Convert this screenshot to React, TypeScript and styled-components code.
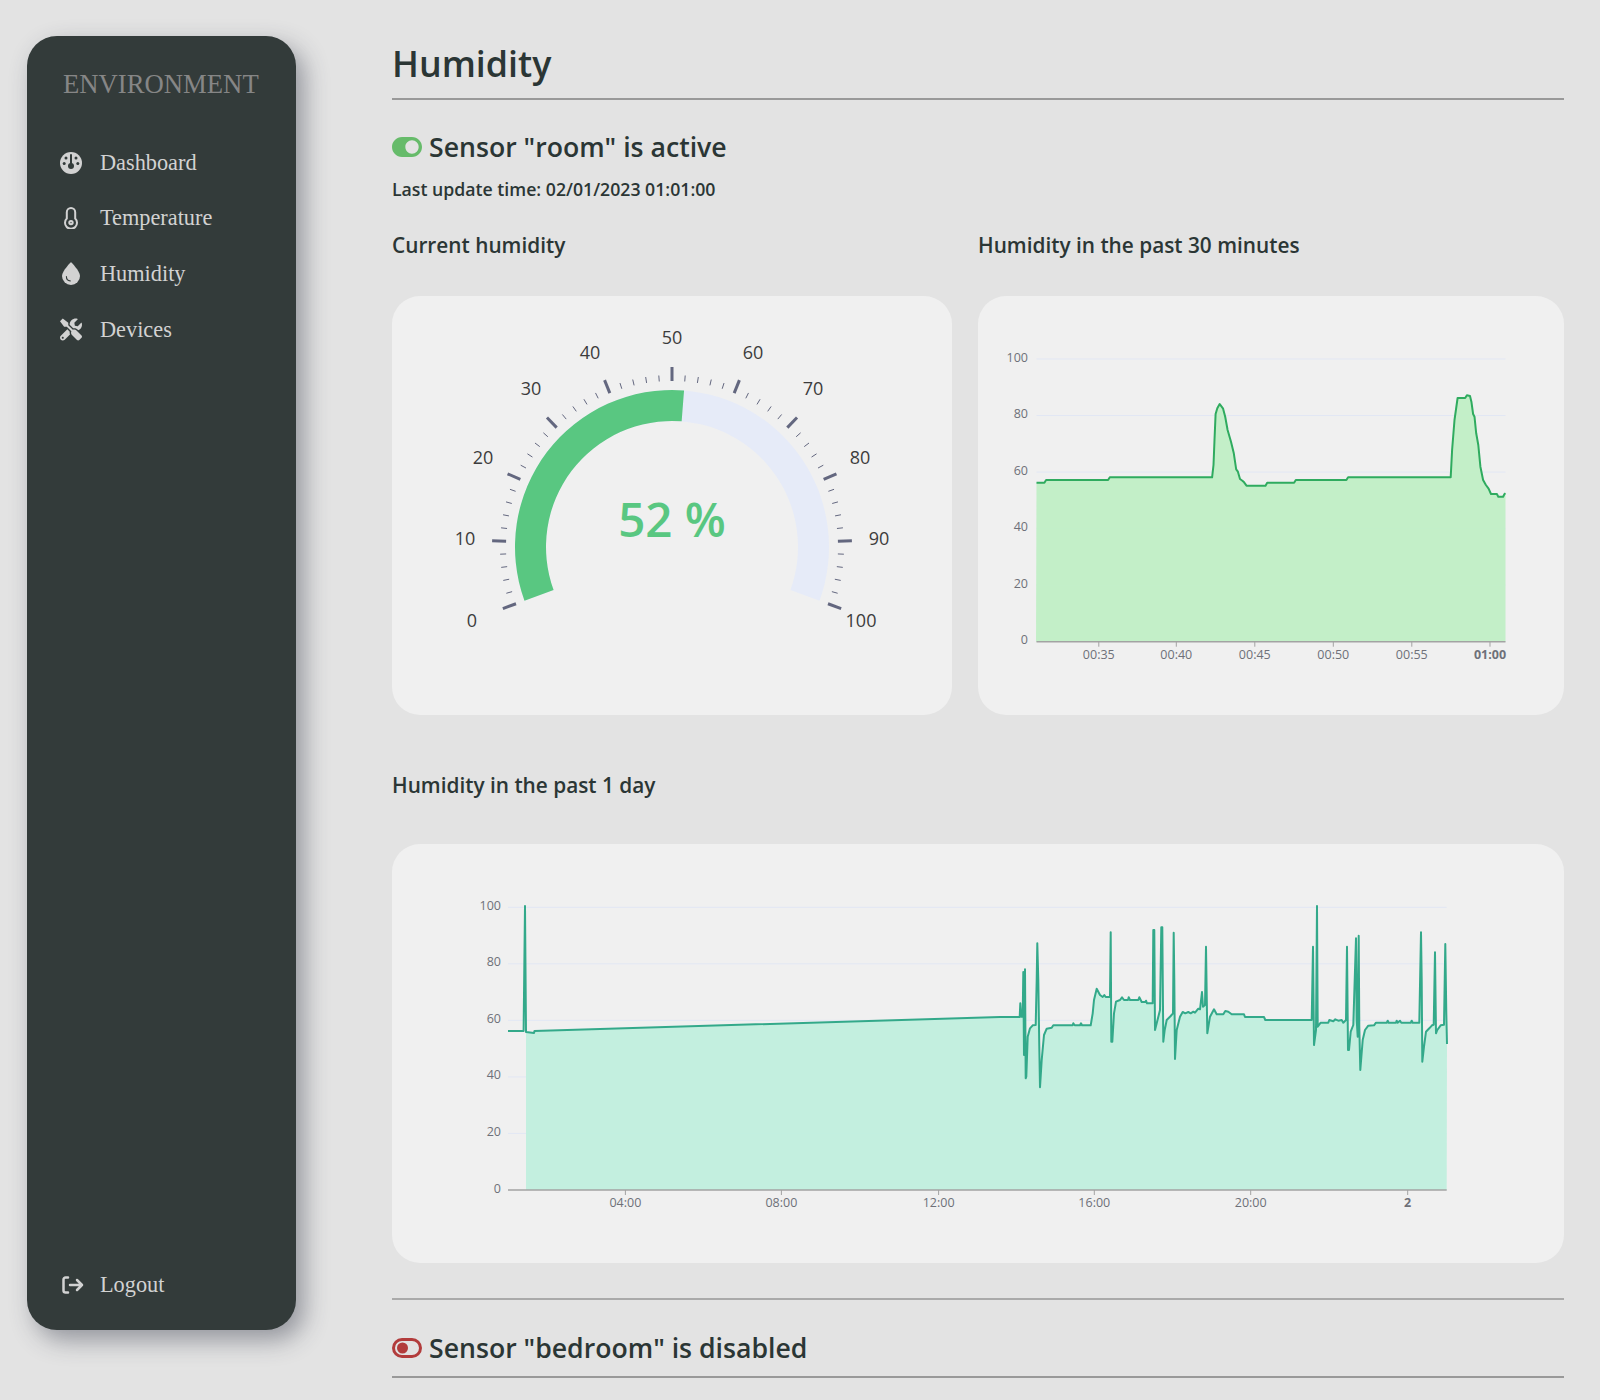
import React from "react";
import styled, { createGlobalStyle } from "styled-components";
import { FaTools, FaToggleOn } from "react-icons/fa";

const GlobalStyle = createGlobalStyle`
  html, body {
    margin: 0;
    padding: 0;
    background: #e3e3e3;
  }
  body {
    font-family: "Open Sans", "Noto Sans", sans-serif;
    color: #2b3635;
    overflow: hidden;
  }
`;

const Page = styled.div`
  display: flex;
  height: 1400px;
  padding: 36px 36px 0 27px;
  box-sizing: border-box;
`;

const Sidebar = styled.nav`
  display: flex;
  flex-direction: column;
  width: 269px;
  height: 1294px;
  flex-shrink: 0;
  box-sizing: border-box;
  padding: 33px 0 17px 33px;
  background: #333b3a;
  border-radius: 30px;
  box-shadow: 8px 10px 24px rgba(50, 55, 70, 0.45);
  font-family: "Liberation Serif", serif;
`;

const Brand = styled.div`
  font-size: 26.7px;
  line-height: 30px;
  margin: 0 0 36px 3px;
  color: #868686;
  white-space: nowrap;
`;

const MenuItem = styled.a<{ $bottom?: boolean }>`
  display: flex;
  align-items: center;
  height: 55.6px;
  margin-top: ${(p) => (p.$bottom ? "auto" : "0")};
  font-size: 22.3px;
  color: #d2d2d2;
  cursor: pointer;
`;

const IconSlot = styled.span`
  display: flex;
  justify-content: center;
  width: 22px;
  margin-right: 18px;
  font-size: 23px;
  color: #d2d2d2;
`;

const LogoutSlot = styled(IconSlot)`
  margin: 0 16px 0 2px;
`;

const Main = styled.main`
  width: 1172px;
  margin-left: 96px;
`;

const Title = styled.h1`
  margin: 0;
  height: 62px;
  font-size: 35.8px;
  line-height: 54px;
  font-weight: 600;
  border-bottom: 2px solid #999;
`;

const SensorHeading = styled.h2`
  display: flex;
  align-items: center;
  gap: 7px;
  margin: 0;
  font-size: 26.65px;
  line-height: 36px;
  font-weight: 600;
  svg {
    font-size: 30px;
    flex-shrink: 0;
  }
`;

const ActiveHeading = styled(SensorHeading)`
  margin-top: 29px;
  svg {
    color: #66bb6a;
  }
`;

const DisabledHeading = styled(SensorHeading)`
  margin-top: 25px;
  height: 46px;
  border-bottom: 2px solid #999;
  padding-bottom: 5px;
`;

const UpdateTime = styled.div`
  margin-top: 12px;
  font-size: 17.7px;
  line-height: 24px;
  font-weight: 600;
`;

const ChartRow = styled.div`
  display: grid;
  grid-template-columns: 560px 586px;
  column-gap: 26px;
  margin-top: 30px;
`;

const ChartTitle = styled.div`
  font-size: 20.8px;
  line-height: 28px;
  font-weight: 600;
  margin-bottom: 37px;
`;

const DayChartTitle = styled(ChartTitle)`
  margin-bottom: 45px;
`;

const Panel = styled.div`
  height: 419px;
  background: #f0f0f0;
  border-radius: 28px;
  overflow: hidden;
  svg {
    display: block;
  }
`;

const DayChartSection = styled.section`
  margin-top: 56px;
`;

const Divider = styled.hr`
  margin: 35px 0 0;
  border: 0;
  border-top: 2px solid #aaa;
`;

const AxisText = styled.text<{ $bold?: boolean }>`
  font-family: "Open Sans", sans-serif;
  font-size: 12.5px;
  font-weight: ${(p) => (p.$bold ? 700 : 400)};
  fill: #6e7079;
`;

const GaugeLabel = styled.text`
  font-family: "Open Sans", sans-serif;
  font-size: 18px;
  fill: #3c3c3c;
`;

const GaugeValue = styled.text`
  font-family: "Open Sans", sans-serif;
  font-size: 47.5px;
  font-weight: 600;
  fill: #59c781;
`;

type Pt = [number, number];

const DARK = "#333b3a";

const DashboardIcon = () => (
  <svg width="22" height="22" viewBox="0 0 22 22">
    <circle cx="11" cy="11" r="11" fill="currentColor" />
    <path d="M11 3v9" stroke={DARK} strokeWidth="2" strokeLinecap="round" />
    <circle cx="11" cy="14" r="3" fill={DARK} />
    <circle cx="4.2" cy="11.5" r="1.5" fill={DARK} />
    <circle cx="17.8" cy="11.5" r="1.5" fill={DARK} />
    <circle cx="6" cy="6" r="1.5" fill={DARK} />
    <circle cx="16" cy="6" r="1.5" fill={DARK} />
  </svg>
);

const ThermometerIcon = () => (
  <svg width="14" height="22" viewBox="0 0 14 22" fill="none" stroke="currentColor" strokeWidth="2">
    <path d="M2.8 11.5V5.2a4.2 4.2 0 0 1 8.4 0v6.3a6 6 0 1 1-8.4 0Z" />
    <circle cx="7" cy="15.6" r="1.7" />
  </svg>
);

const DropIcon = () => (
  <svg width="18" height="23" viewBox="0 0 18 23">
    <path d="M9 0C9 0 18 9 18 14a9 9 0 0 1-18 0C0 9 9 0 9 0Z" fill="currentColor" />
    <path d="M4.4 14.5c0 2.6 1.6 4.2 3.8 4.4" fill="none" stroke={DARK} strokeWidth="1.1" strokeLinecap="round" />
  </svg>
);

const LogoutIcon = () => (
  <svg width="22" height="18" viewBox="0 0 22 18" fill="none" stroke="currentColor" strokeWidth="2.5" strokeLinecap="round" strokeLinejoin="round">
    <path d="M6 1.5H3.5a2 2 0 0 0-2 2v11a2 2 0 0 0 2 2H6" />
    <path d="M8 9h12M15 4l5 5-5 5" />
  </svg>
);

const ToggleOffIcon = () => (
  <svg width="30" height="20" viewBox="0 0 30 20">
    <rect x="1.5" y="1.5" width="27" height="17" rx="8.5" fill="none" stroke="#b23c3c" strokeWidth="3" />
    <circle cx="10.5" cy="10" r="5.5" fill="#b23c3c" />
  </svg>
);

/* gauge, drawn in panel coordinates */
const GX = 280;
const GY = 251;

const polar = (r: number, deg: number): Pt => {
  const a = (deg * Math.PI) / 180;
  return [GX + r * Math.cos(a), GY - r * Math.sin(a)];
};

const angleOf = (v: number) => 200 - (v / 100) * 220;

const ringPath = (from: number, to: number, r0: number, r1: number) => {
  const [x0, y0] = polar(r1, angleOf(from));
  const [x1, y1] = polar(r1, angleOf(to));
  const [x2, y2] = polar(r0, angleOf(to));
  const [x3, y3] = polar(r0, angleOf(from));
  const large = ((to - from) / 100) * 220 > 180 ? 1 : 0;
  return `M${x0} ${y0}A${r1} ${r1} 0 ${large} 1 ${x1} ${y1}L${x2} ${y2}A${r0} ${r0} 0 ${large} 0 ${x3} ${y3}Z`;
};

const gaugeLabels: [string, number, number][] = [
  ["0", 80, 324],
  ["10", 73, 242],
  ["20", 91, 161],
  ["30", 139, 92],
  ["40", 198, 56],
  ["50", 280, 41],
  ["60", 361, 56],
  ["70", 421, 92],
  ["80", 468, 161],
  ["90", 487, 242],
  ["100", 469, 324],
];

const Gauge = () => {
  const ticks = [];
  for (let v = 0; v <= 100; v += 2) {
    const major = v % 10 === 0;
    const [x0, y0] = polar(major ? 180 : 172, angleOf(v));
    const [x1, y1] = polar(166, angleOf(v));
    ticks.push(<line key={v} x1={x0} y1={y0} x2={x1} y2={y1} stroke="#63677f" strokeWidth={major ? 3 : 1} />);
  }
  return (
    <svg width="560" height="418" viewBox="0 0 560 418">
      <path d={ringPath(0, 100, 126, 157)} fill="#e6ebf8" />
      <path d={ringPath(0, 52, 126, 157)} fill="#59c781" />
      {ticks}
      {gaugeLabels.map(([t, x, y]) => (
        <GaugeLabel key={t} x={x} y={y} textAnchor="middle" dominantBaseline="central">
          {t}
        </GaugeLabel>
      ))}
      <GaugeValue x={280} y={222} textAnchor="middle" dominantBaseline="central">
        52 %
      </GaugeValue>
    </svg>
  );
};

const toPath = (pts: Pt[]) => pts.map(([x, y], i) => `${i ? "L" : "M"}${x.toFixed(1)} ${y.toFixed(1)}`).join("");

interface AreaChartProps {
  width: number;
  left: number;
  right: number;
  yZero: number;
  yTop: number;
  labelX: number;
  labelY: number;
  xTicks: { x: number; label: string; bold?: boolean }[];
  line: Pt[];
  fillFrom: number;
  fill: string;
  stroke: string;
}

const AreaChart = ({ width, left, right, yZero, yTop, labelX, labelY, xTicks, line, fillFrom, fill, stroke }: AreaChartProps) => {
  const filled = line.filter(([x]) => x >= fillFrom);
  const area = `${toPath(filled)}L${right} ${yZero}L${fillFrom} ${yZero}Z`;
  return (
    <svg width={width} height="418" viewBox={`0 0 ${width} 418`}>
      {[0, 20, 40, 60, 80, 100].map((v) => {
        const y = yZero - ((yZero - yTop) * v) / 100;
        return (
          <g key={v}>
            {v > 0 && <line x1={left} x2={right} y1={y} y2={y} stroke="#e2e7f4" />}
            <AxisText x={labelX} y={y - 2} textAnchor="end" dominantBaseline="central">
              {v}
            </AxisText>
          </g>
        );
      })}
      <path d={area} fill={fill} fillOpacity="0.93" />
      <line x1={left} x2={right} y1={yZero} y2={yZero} stroke="#a3a3a3" strokeWidth="1.5" />
      {xTicks.map((t) => (
        <g key={t.label}>
          <line x1={t.x} x2={t.x} y1={yZero} y2={yZero + 5} stroke="#a3a3a3" />
          <AxisText $bold={t.bold} x={t.x} y={labelY} textAnchor="middle" dominantBaseline="central">
            {t.label}
          </AxisText>
        </g>
      ))}
      <path d={toPath(line)} fill="none" stroke={stroke} strokeWidth="2" strokeLinejoin="round" />
    </svg>
  );
};

const raw30: Pt[] = [
  [135, 458], [158, 458], [163, 450], [343, 450], [348, 442], [645, 442], [649, 405], [652, 330], [655, 252], [660, 235],
  [667, 222], [677, 236], [683, 260], [690, 300], [700, 335], [708, 370], [715, 418], [720, 425], [726, 447], [733, 452],
  [738, 457], [745, 467], [800, 467], [805, 458], [883, 458], [888, 450], [1035, 450], [1040, 442], [1338, 442], [1342, 360],
  [1349, 270], [1358, 204], [1380, 204], [1385, 196], [1394, 198], [1398, 215], [1403, 252], [1407, 260], [1412, 310],
  [1418, 345], [1424, 410], [1432, 450], [1440, 465], [1448, 476], [1455, 492], [1472, 492], [1476, 500], [1490, 500],
  [1494, 492], [1497, 490],
];
const line30: Pt[] = raw30.map(([x, y]) => [990 + x / 2.904 - 978, 330 + y / 3 - 296]);

const rawDay: Pt[] = [
  [0, 411], [59, 411], [61, 370], [64, 410], [68, 410], [70, 276], [72, 525], [75, 268], [77, 595], [79, 590], [83, 470],
  [90, 445], [98, 436], [107, 435], [110, 300], [112, 190], [115, 300], [118, 500], [120, 622], [125, 540], [132, 465],
  [140, 446], [155, 443], [160, 436], [218, 436], [220, 430], [224, 436], [240, 436], [243, 430], [246, 436], [272, 436],
  [278, 400], [282, 360], [290, 326], [300, 345], [308, 351], [313, 345], [317, 351], [330, 351], [332, 157], [334, 485],
  [337, 485], [342, 400], [348, 365], [360, 360], [366, 352], [372, 360], [384, 360], [386, 352], [390, 360], [415, 360],
  [418, 352], [425, 366], [436, 366], [438, 362], [441, 370], [458, 370], [460, 150], [463, 150], [465, 450], [470, 430],
  [480, 390], [484, 142], [487, 142], [490, 485], [494, 450], [500, 420], [512, 408], [519, 400], [521, 158], [523, 300],
  [525, 537], [530, 450], [540, 410], [548, 396], [556, 400], [565, 396], [572, 400], [580, 395], [585, 398], [595, 386],
  [600, 388], [606, 336], [609, 380], [615, 375], [618, 200], [622, 460], [630, 410], [642, 388], [650, 403], [670, 403],
  [676, 393], [685, 395], [695, 403], [732, 403], [735, 411], [792, 411], [796, 420], [935, 420], [939, 200], [942, 495],
  [948, 450], [951, 78], [953, 440], [962, 428], [985, 428], [988, 420], [1000, 424], [1006, 418], [1015, 422], [1025, 420],
  [1030, 428], [1038, 420], [1041, 200], [1044, 510], [1047, 510], [1052, 455], [1060, 435], [1068, 175], [1070, 420],
  [1073, 470], [1076, 167], [1078, 440], [1081, 570], [1088, 480], [1095, 450], [1105, 437], [1122, 436], [1128, 428],
  [1160, 428], [1163, 422], [1166, 428], [1188, 428], [1190, 422], [1193, 428], [1200, 422], [1204, 428], [1232, 428],
  [1235, 422], [1238, 428], [1258, 428], [1263, 157], [1265, 300], [1267, 545], [1272, 500], [1278, 455], [1288, 445],
  [1296, 436], [1301, 434], [1305, 217], [1308, 460], [1312, 450], [1322, 436], [1332, 434], [1336, 192], [1339, 400],
  [1341, 492],
];
const lineDay: Pt[] = [
  [116, 187], [131.6, 187], [133, 62], [134, 188], [142, 189], [142.5, 187],
  ...rawDay.map(([x, y]): Pt => [1000 + x / 3 - 392, 880 + y / 3 - 844]),
];

const ticks30 = [
  { x: 120.8, label: "00:35" },
  { x: 198.3, label: "00:40" },
  { x: 276.8, label: "00:45" },
  { x: 355.3, label: "00:50" },
  { x: 433.8, label: "00:55" },
  { x: 512, label: "01:00", bold: true },
];

const ticksDay = [
  { x: 233.4, label: "04:00" },
  { x: 389.4, label: "08:00" },
  { x: 546.6, label: "12:00" },
  { x: 702.3, label: "16:00" },
  { x: 858.7, label: "20:00" },
  { x: 1015.7, label: "2", bold: true },
];

export default function App() {
  return (
    <Page>
      <GlobalStyle />
      <Sidebar>
        <Brand>ENVIRONMENT</Brand>
        <MenuItem>
          <IconSlot>
            <DashboardIcon />
          </IconSlot>
          Dashboard
        </MenuItem>
        <MenuItem>
          <IconSlot>
            <ThermometerIcon />
          </IconSlot>
          Temperature
        </MenuItem>
        <MenuItem>
          <IconSlot>
            <DropIcon />
          </IconSlot>
          Humidity
        </MenuItem>
        <MenuItem>
          <IconSlot>
            <FaTools />
          </IconSlot>
          Devices
        </MenuItem>
        <MenuItem $bottom>
          <LogoutSlot>
            <LogoutIcon />
          </LogoutSlot>
          Logout
        </MenuItem>
      </Sidebar>
      <Main>
        <Title>Humidity</Title>
        <ActiveHeading>
          <FaToggleOn />
          Sensor "room" is active
        </ActiveHeading>
        <UpdateTime>Last update time: 02/01/2023 01:01:00</UpdateTime>
        <ChartRow>
          <div>
            <ChartTitle>Current humidity</ChartTitle>
            <Panel>
              <Gauge />
            </Panel>
          </div>
          <div>
            <ChartTitle>Humidity in the past 30 minutes</ChartTitle>
            <Panel>
              <AreaChart
                width={586}
                left={58.5}
                right={527.5}
                yZero={345.7}
                yTop={63}
                labelX={50}
                labelY={358}
                xTicks={ticks30}
                line={line30}
                fillFrom={58}
                fill="#bfefc5"
                stroke="#2fab5f"
              />
            </Panel>
          </div>
        </ChartRow>
        <DayChartSection>
          <DayChartTitle>Humidity in the past 1 day</DayChartTitle>
          <Panel>
            <AreaChart
              width={1172}
              left={116}
              right={1054.7}
              yZero={346}
              yTop={63.3}
              labelX={109}
              labelY={358}
              xTicks={ticksDay}
              line={lineDay}
              fillFrom={134}
              fill="#bfefde"
              stroke="#33a98a"
            />
          </Panel>
        </DayChartSection>
        <Divider />
        <DisabledHeading>
          <ToggleOffIcon />
          Sensor "bedroom" is disabled
        </DisabledHeading>
      </Main>
    </Page>
  );
}
